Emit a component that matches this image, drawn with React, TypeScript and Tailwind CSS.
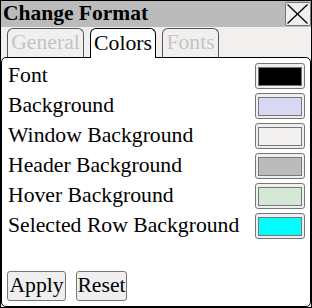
import React from "react";

const rows: { label: string; color: string }[] = [
  { label: "Font", color: "#000000" },
  { label: "Background", color: "#d8d8f4" },
  { label: "Window Background", color: "#f2f0ee" },
  { label: "Header Background", color: "#bbbbbb" },
  { label: "Hover Background", color: "#d4e6d4" },
  { label: "Selected Row Background", color: "#00ffff" },
];

export default function App() {
  return (
    <div className="w-[312px] h-[308px] border border-black bg-[#f2f0ee] flex flex-col text-[21.7px] leading-none text-black font-['Liberation_Serif','Times_New_Roman',serif]">
      <div className="h-[26px] bg-[#bbbbbb] flex items-center justify-between shrink-0">
        <span className="font-bold pl-[2px] text-[21.5px]">Change Format</span>
        <button className="w-[26px] h-[24px] border border-[#767676] rounded-[2px] bg-[#efefef] flex items-center justify-center p-0">
          <svg width="24" height="22" viewBox="0 0 24 22">
            <line x1="1.5" y1="1.5" x2="21.5" y2="20.5" stroke="#000" strokeWidth="1.3" />
            <line x1="21.5" y1="1.5" x2="1.5" y2="20.5" stroke="#000" strokeWidth="1.3" />
          </svg>
        </button>
      </div>
      <div className="h-[30px] flex items-end pl-[6px] gap-[6px] shrink-0">
        <div className="w-[77px] h-[29px] border border-b-0 border-[#555] rounded-t-[6px] flex items-center justify-center text-[#c4c4c4]">
          General
        </div>
        <div className="relative z-10 w-[66px] h-[30px] -mb-px border border-b-0 border-black rounded-t-[6px] bg-white flex items-center justify-center">
          Colors
        </div>
        <div className="w-[57px] h-[29px] border border-b-0 border-[#555] rounded-t-[6px] flex items-center justify-center text-[#c4c4c4]">
          Fonts
        </div>
      </div>
      <div className="flex-1 border border-black rounded-[5px] bg-white flex flex-col pt-[3px] pb-[5px]">
        {rows.map((r) => (
          <div key={r.label} className="h-[30px] flex items-center justify-between pl-[6px] pr-[5px]">
            <span>{r.label}</span>
            <div className="w-[50px] h-[26px] border border-[#767676] rounded-[3px] bg-[#efefef] flex items-center justify-center">
              <div className="w-[44px] h-[19px] border border-[#777777] mt-[1px]" style={{ backgroundColor: r.color }} />
            </div>
          </div>
        ))}
        <div className="mt-auto flex gap-[10px] pl-[5px]">
          <button className="w-[59px] h-[30px] border border-[#767676] rounded-[3px] bg-[#efefef] flex items-center justify-center p-0">
            Apply
          </button>
          <button className="w-[51px] h-[30px] border border-[#767676] rounded-[3px] bg-[#efefef] flex items-center justify-center p-0">
            Reset
          </button>
        </div>
      </div>
    </div>
  );
}
